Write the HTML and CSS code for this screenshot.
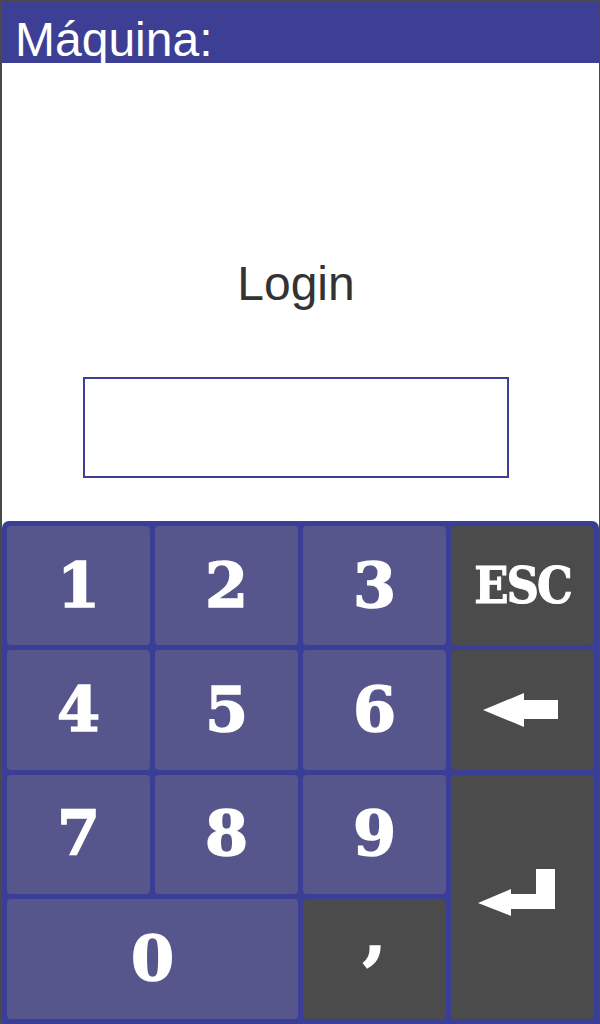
FILE: index.html
```html
<!DOCTYPE html>
<html lang="pt">
<head>
<meta charset="utf-8">
<title>Máquina</title>
<link rel="stylesheet" href="styles.css">
</head>
<body>
<div class="app">
  <header class="header">Máquina:</header>
  <main class="main">
    <div class="login-col">
      <div class="login-title">Login</div>
      <div class="login-input"></div>
    </div>
  </main>
  <section class="keypad">
    <div class="key num">1</div>
    <div class="key num">2</div>
    <div class="key num">3</div>
    <div class="key dark esc">ESC</div>
    <div class="key num">4</div>
    <div class="key num">5</div>
    <div class="key num">6</div>
    <div class="key dark">
      <svg class="icon-back" width="75" height="34" viewBox="0 0 75 34"><polygon points="0,17 41,0 41,7 75,7 75,26 41,26 41,34" fill="#fff"/></svg>
    </div>
    <div class="key num">7</div>
    <div class="key num">8</div>
    <div class="key num">9</div>
    <div class="key dark enter">
      <svg class="icon-enter" width="77" height="47" viewBox="0 0 77 47"><polygon points="0,34 33,20 33,25 58,25 58,0 77,0 77,40 33,40 33,47" fill="#fff"/></svg>
    </div>
    <div class="key num zero">0</div>
    <div class="key dark num comma">,</div>
  </section>
</div>
</body>
</html>
```
FILE: styles.css
```css
html, body {
  margin: 0;
  padding: 0;
}
body {
  background: #4a4a4a;
  width: 600px;
  height: 1024px;
  overflow: hidden;
}
.app {
  margin: 2px 1px 0 2px;
  height: 1022px;
  display: flex;
  flex-direction: column;
  background: #ffffff;
}
.header {
  box-sizing: border-box;
  height: 61px;
  background: #3d3f94;
  color: #ffffff;
  font-family: "Liberation Sans", Arial, sans-serif;
  font-size: 48px;
  line-height: 48px;
  padding: 14px 0 0 13px;
  white-space: nowrap;
}
.main {
  flex: 1;
  background: #ffffff;
  display: flex;
}
.login-col {
  margin-left: 81px;
  width: 426px;
  padding-top: 194px;
  display: flex;
  flex-direction: column;
  align-items: center;
}
.login-title {
  font-family: "Liberation Sans", Arial, sans-serif;
  font-size: 48px;
  line-height: 54px;
  color: #333333;
}
.login-input {
  box-sizing: border-box;
  margin-top: 66px;
  width: 426px;
  height: 101px;
  border: 2px solid #3d3f94;
  background: #ffffff;
}
.keypad {
  box-sizing: border-box;
  height: 503px;
  background: #3b3e96;
  border-radius: 7px 7px 0 0;
  padding: 5px;
  display: grid;
  grid-template-columns: repeat(4, 143px);
  grid-template-rows: repeat(4, 1fr);
  gap: 5px;
}
.key {
  background: #56568c;
  border-radius: 4px;
  display: flex;
  align-items: center;
  justify-content: center;
  color: #ffffff;
  font-family: "DejaVu Serif", "Liberation Serif", serif;
  font-weight: bold;
  font-size: 62px;
  line-height: 1;
  -webkit-text-stroke: 1.5px #ffffff;
}
.key.dark {
  background: #4b4b4b;
}
.esc {
  font-family: "DejaVu Serif Condensed", "DejaVu Serif", serif;
  font-stretch: condensed;
  font-size: 50px;
  letter-spacing: -2px;
  -webkit-text-stroke: 1px #ffffff;
}
.enter {
  grid-column: 4;
  grid-row: 3 / span 2;
}
.zero {
  grid-column: 1 / span 2;
}
.comma {
  font-size: 68px;
  padding-bottom: 52px;
}
.icon-back {
  margin-right: 4px;
}
.icon-enter {
  margin-right: 12px;
  margin-bottom: 9px;
}
```
